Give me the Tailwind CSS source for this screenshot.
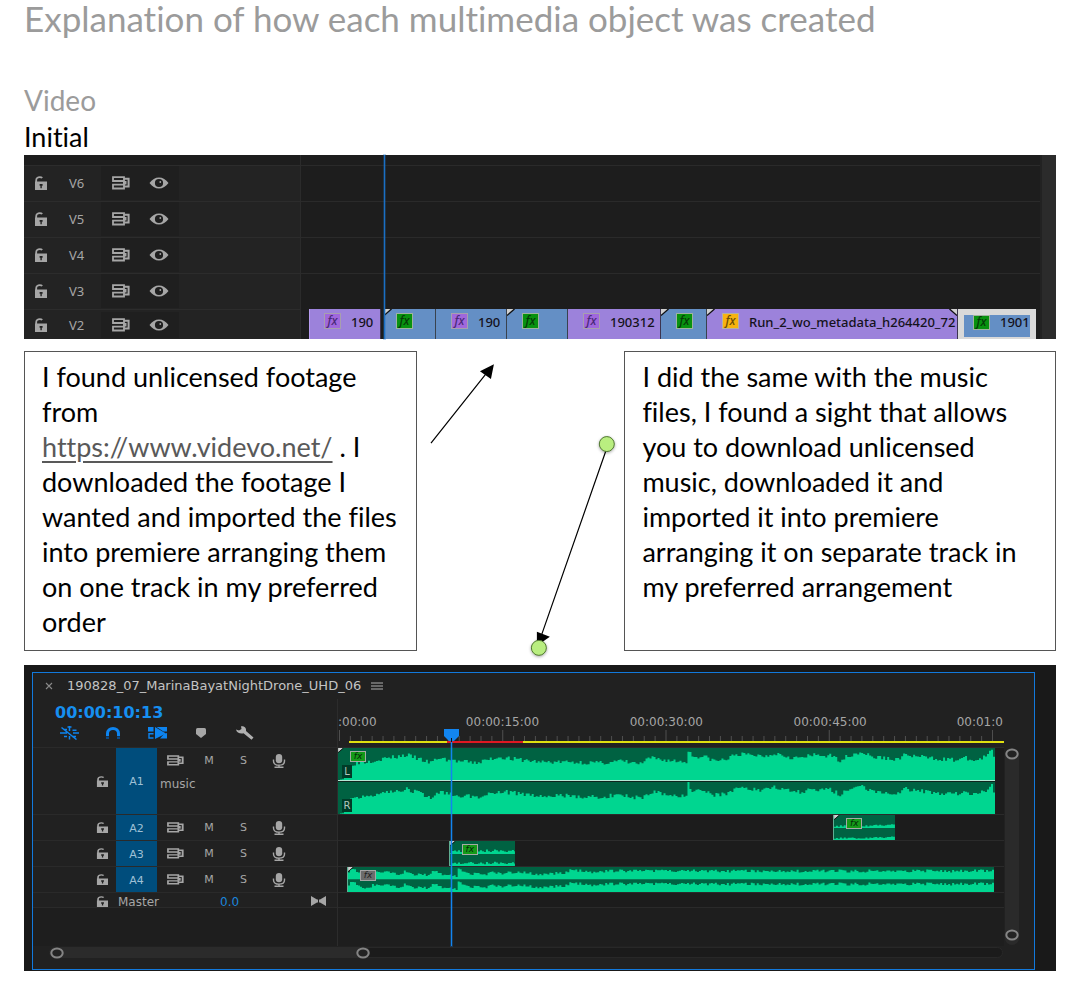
<!DOCTYPE html>
<html lang="en">
<head>
<meta charset="utf-8">
<meta name="viewport" content="width=device-width, initial-scale=1">
<title>Explanation of how each multimedia object was created</title>
<script src="https://cdn.jsdelivr.net/npm/@tailwindcss/browser@4"></script>
</head>
<body class="bg-white font-['Lato',sans-serif] text-black [font-variant-ligatures:none]">

<!-- Shared icon symbols -->
<svg width="0" height="0" class="absolute" aria-hidden="true">
  <symbol id="lock" viewBox="0 0 13 15" preserveAspectRatio="none">
    <path d="M2.200 7V4.500C2.200 2.300 3.800 1.300 5.800 1.300c1 0 1.800.2 2.500.8" fill="none" stroke="currentColor" stroke-width="1.800"/>
    <path fill="currentColor" fill-rule="evenodd" d="M1 6h12v9H1zM5.600 8.500v2h.8v2.500h1.400v-2.500h.8v-2z"/>
  </symbol>
  <symbol id="sync" viewBox="0 0 18 14" preserveAspectRatio="none">
    <path d="M1 1.200h11v3.800H1zM1 8.700h11v3.800H1z" fill="none" stroke="currentColor" stroke-width="1.800"/>
    <path d="M12 2.800h4.600v7.700H12" fill="none" stroke="currentColor" stroke-width="2"/>
    <path d="M11 5h3.500v3.500h-3.500z" fill="currentColor"/>
  </symbol>
  <symbol id="eye" viewBox="0 0 20 12">
    <path fill="currentColor" fill-rule="evenodd" d="M.5 6C3 2.500 6.300.5 10 .5S17 2.500 19.500 6C17 9.500 13.700 11.500 10 11.500S3 9.500.5 6zM10 1.900a4.100 4.100 0 1 0 0 8.200 4.100 4.100 0 0 0 0-8.200z"/>
    <circle cx="11.300" cy="5" r=".9" fill="currentColor"/>
  </symbol>
  <symbol id="mic" viewBox="0 0 14 15" preserveAspectRatio="none">
    <rect x="3.800" y="0" width="6.400" height="10" rx="3.200" fill="currentColor"/>
    <path d="M1.500 6v1.500c0 3 2.300 4.500 5.500 4.500s5.500-1.500 5.500-4.500V6M7 12v2M2.500 14.200h9" fill="none" stroke="currentColor" stroke-width="1.400"/>
  </symbol>
  <symbol id="knob" viewBox="0 0 14 12">
    <ellipse cx="7" cy="6" rx="5.700" ry="4.500" fill="#232323" stroke="#858585" stroke-width="2"/>
  </symbol>
  <symbol id="corner" viewBox="0 0 8 7">
    <path d="M0 0h7L0 6z" fill="#d0d0d0"/><path d="M7.500 0L0 6.500" stroke="#111" stroke-width="1.300"/>
  </symbol>
</svg>

<main class="pl-6 pr-[30px]">
  <h1 class="text-[35px] leading-9 text-[#9b9b9b]">Explanation of how each multimedia object was created</h1>
  <h2 class="mt-[46px] text-[28px] leading-9 text-[#9b9b9b]">Video</h2>
  <h3 class="text-[27px] leading-[37px]">Initial</h3>

  <!-- Video tracks -->
  <section aria-label="Video tracks" class="flex bg-[#1d1d1d] font-['Noto_Sans',sans-serif] text-[#a6a6a6]">
    <div class="w-[277px] shrink-0 border-r border-[#2b2b2b] bg-[#232323]">
      <div class="h-[10px] bg-[#1d1d1d]"></div>
      <div id="video-heads"></div>
    </div>
    <div class="relative flex min-w-0 flex-1 flex-col pt-[10px]">
      <div class="h-9 border-t border-[#2a2a2a]"></div>
      <div class="h-9 border-t border-[#2a2a2a]"></div>
      <div class="h-9 border-t border-[#2a2a2a]"></div>
      <div class="h-9 border-t border-[#2a2a2a]"></div>
      <div class="grid h-[30px] grid-cols-[8fr_72fr_3fr_52fr_71fr_61fr_93fr_46fr_251fr_78fr_4fr] text-[13px] leading-[26px] font-medium whitespace-nowrap text-[#14121c]">
        <div></div>
        <div class="flex min-w-0 gap-[10px] overflow-hidden border-x border-l-[#b79cf0] border-r-[#3c3550] bg-[#9c82db] pl-[14px]"><i class="mt-1 h-4 w-[17px] shrink-0 border border-[#a79fae] bg-[#a068dc] text-center text-[12px] leading-[13px] text-[#4a2a78]">fx</i><span>190</span></div>
        <div></div>
        <div class="relative flex min-w-0 overflow-hidden border-r border-[#39424e] bg-[#648fc5] pl-3"><svg class="absolute left-0 top-0 h-[7px] w-2"><use href="#corner"/></svg><i class="mt-1 h-4 w-[17px] shrink-0 border border-[#9fb39f] bg-[#08920f] text-center text-[12px] leading-[13px] text-[#063b08]">fx</i></div>
        <div class="flex min-w-0 gap-[10px] overflow-hidden border-r border-[#39424e] bg-[#648fc5] pl-[15px]"><i class="mt-1 h-4 w-[17px] shrink-0 border border-[#a79fae] bg-[#a068dc] text-center text-[12px] leading-[13px] text-[#4a2a78]">fx</i><span>190</span></div>
        <div class="relative flex min-w-0 overflow-hidden border-r border-[#39424e] bg-[#648fc5] pl-[15px]"><svg class="absolute left-0 top-0 h-[7px] w-2"><use href="#corner"/></svg><i class="mt-1 h-4 w-[17px] shrink-0 border border-[#9fb39f] bg-[#08920f] text-center text-[12px] leading-[13px] text-[#063b08]">fx</i></div>
        <div class="flex min-w-0 gap-[10px] overflow-hidden border-r border-[#3c3550] bg-[#9c82db] pl-[15px]"><i class="mt-1 h-4 w-[17px] shrink-0 border border-[#a79fae] bg-[#a068dc] text-center text-[12px] leading-[13px] text-[#4a2a78]">fx</i><span>190312</span></div>
        <div class="relative flex min-w-0 overflow-hidden border-r border-[#39424e] bg-[#648fc5] pl-[15px]"><svg class="absolute left-0 top-0 h-[7px] w-2"><use href="#corner"/></svg><i class="mt-1 h-4 w-[17px] shrink-0 border border-[#9fb39f] bg-[#08920f] text-center text-[12px] leading-[13px] text-[#063b08]">fx</i></div>
        <div class="relative flex min-w-0 gap-[10px] overflow-hidden border-r border-[#3c3550] bg-[#9c82db] pl-[15px]"><svg class="absolute left-0 top-0 h-[7px] w-2"><use href="#corner"/></svg><i class="mt-1 h-4 w-[17px] shrink-0 border border-[#b8b0a0] bg-[#f7b310] text-center text-[12px] leading-[13px] text-[#6b4b04]">fx</i><span>Run_2_wo_metadata_h264420_72</span><svg class="absolute right-0 top-0 h-[7px] w-2 -scale-x-100"><use href="#corner"/></svg></div>
        <div class="flex min-w-0 border-x-[6px] border-t-[6px] border-b-2 border-[#d9d9d9] bg-[#648fc5] pl-[9px] leading-[14px]"><i class="h-[15px] w-[17px] shrink-0 border border-[#9fb39f] bg-[#08920f] text-center text-[12px] leading-[12px] text-[#063b08]">fx</i><span class="ml-[10px]">1901</span></div>
        <div></div>
      </div>
      <div class="absolute inset-y-0 left-[11.2%] w-px bg-[#1a6fc4] outline outline-[#1a6fc4]/30"></div>
    </div>
    <div class="w-4 shrink-0 border-l-2 border-[#222222] bg-[#2b2b2b]"></div>
  </section>

  <!-- Notes and connecting arrows -->
  <section class="grid grid-cols-[393fr_208fr_432fr] pt-3 pb-[14px] text-[27px] leading-[35px]">
    <p class="min-h-[300px] border border-[#555] px-[17px] pt-[7px]">I found unlicensed footage<br>from<br><a href="https://www.videvo.net/" class="text-[#595959] underline decoration-2 underline-offset-4">https://www.videvo.net/</a> . I<br>downloaded the footage I<br>wanted and imported the files<br>into premiere arranging them<br>on one track in my preferred<br>order</p>
    <svg viewBox="0 0 208 300" class="h-[300px] w-full overflow-visible" aria-hidden="true">
      <defs><filter id="shade" x="-50%" y="-50%" width="200%" height="200%"><feDropShadow dx="0" dy="1" stdDeviation="1.500" flood-opacity=".35"/></filter></defs>
      <path d="M14 92L72 19M189 100L124 286" stroke="#000" stroke-width="1.200" fill="none"/>
      <path d="M77 13L63 20L74 28ZM120 295L120 281L133 286Z"/>
      <circle cx="190" cy="93" r="7.500" fill="#b9ee80" stroke="#4f7530" filter="url(#shade)"/>
      <circle cx="122" cy="297" r="7.500" fill="#b9ee80" stroke="#4f7530" filter="url(#shade)"/>
    </svg>
    <p class="min-h-[300px] border border-[#555] px-[17px] pt-[7px]">I did the same with the music<br>files, I found a sight that allows<br>you to download unlicensed<br>music, downloaded it and<br>imported it into premiere<br>arranging it on separate track in<br>my preferred arrangement</p>
  </section>

  <!-- Audio sequence -->
  <section aria-label="Audio sequence" class="border-x-8 border-[#191919] bg-[#191919] pt-[7px] pr-[13px] pb-px font-['DejaVu_Sans',sans-serif] text-[#a6a6a6]">
    <div class="border border-[#1279dc] bg-[#212121]">
      <div class="flex h-[26px] items-center pl-3 text-[13px]">
        <button type="button" aria-label="Close sequence" class="flex w-[22px]"><svg class="h-2 w-2" viewBox="0 0 8 8"><path d="M1 1l6 6M7 1L1 7" stroke="#8a8a8a" stroke-width="1.100"/></svg></button>
        <span class="text-[#c4c4c4]">190828_07_MarinaBayatNightDrone_UHD_06</span>
        <button type="button" aria-label="Panel menu" class="ml-[10px]"><svg class="h-2 w-3" viewBox="0 0 12 8"><path d="M0 1h12M0 4h12M0 7h12" stroke="#b0b0b0" stroke-width="1.200"/></svg></button>
      </div>
      <div class="flex">
        <!-- Track headers -->
        <div class="w-[305px] shrink-0 border-r border-[#2c2c2c]">
          <div class="h-[49px] border-b border-[#2a2a2a] pl-[22px]">
            <div class="text-[16px] leading-7 font-bold text-[#168ff0]">00:00:10:13</div>
            <div class="flex h-3 items-center pl-[5px] text-[#0d84f0]">
              <button type="button" aria-label="Nest sequences" class="w-[45px]"><svg class="h-[14px] w-[19px]" viewBox="0 0 19 14"><path d="M0 7h7M4 3.500h3M4 10.500h3M9.500 0v5M7.500 1h4M9.500 10v3.500M13 7h6M12.500 4.200h4M12 10.500h4M1.500 1.500l15 12" stroke="currentColor" stroke-width="1.500"/></svg></button>
              <button type="button" aria-label="Snap" class="w-[43px]"><svg class="h-3 w-4" viewBox="0 0 16 12"><path d="M2.500 9V6.500c0-3 2.300-5 5.500-5s5.500 2 5.500 5V9" fill="none" stroke="currentColor" stroke-width="3"/><path d="M1 9.500h3v2.500H1zM12 9.500h3v2.500h-3z" fill="#0a4a88"/></svg></button>
              <button type="button" aria-label="Linked selection" class="w-[47px]"><svg class="h-3 w-[19px]" viewBox="0 0 19 12"><path d="M0 0h5.500v4.500H0zM8.500 0H19v4.500h-3.500zM16 7l3-1v5.500h-7z" fill="currentColor"/><path d="M5.500 6.700H1v4.300h4.500" fill="none" stroke="currentColor" stroke-width="1.400"/><path d="M7 0v12L18 6.500z" fill="currentColor"/></svg></button>
              <button type="button" aria-label="Add marker" class="w-[41px] text-[#a6a6a6]"><svg class="h-[10px] w-3" viewBox="0 0 12 10"><path d="M2.500 0h7q1.500 0 1.500 1.500V6L6 10 1 6V1.500Q1 0 2.500 0z" fill="currentColor"/></svg></button>
              <button type="button" aria-label="Timeline settings" class="text-[#b0b0b0]"><svg class="h-[14px] w-[18px]" viewBox="0 0 18 14"><path d="M0 3.500L3 4.500 5.500 3 5 .3C8.500 0 10.500 2 10 5l7.500 6.500-2 2.300L7.500 7.300C4 8 .5 6.500 0 3.500z" fill="currentColor"/></svg></button>
            </div>
          </div>
          <div id="audio-heads"></div>
          <div class="grid h-[15px] grid-cols-[83px_101px_91px_29px] items-center border-b border-[#2a2a2a] text-[12px] leading-[14px]">
            <button type="button" aria-label="Lock master" class="flex justify-end pr-2"><svg class="h-[11px] w-3"><use href="#lock"/></svg></button>
            <span class="pt-[2px] pl-[2px]">Master</span>
            <span class="pt-[2px] pl-[3px] text-[#1b86dc]">0.0</span>
            <button type="button" aria-label="Fit master" class="flex pl-[3px]"><svg class="h-[10px] w-[15px]" viewBox="0 0 15 10"><path d="M0 0l6 3.500h3L15 0v10L9 6.500H6L0 10z" fill="currentColor"/><path d="M7.500 3v4" stroke="#212121"/></svg></button>
          </div>
          <div class="h-[38px] bg-[#1e1e1e]"></div>
        </div>

        <!-- Timeline -->
        <div class="relative flex min-w-0 flex-1 flex-col">
          <div class="flex h-[31px] items-end overflow-hidden text-[12px] leading-4 whitespace-nowrap">
            <span class="w-[19.2%] shrink-0">:00:00</span>
            <span class="w-[24.6%] shrink-0">00:00:15:00</span>
            <span class="w-[24.6%] shrink-0">00:00:30:00</span>
            <span class="w-[24.5%] shrink-0">00:00:45:00</span>
            <span>00:01:0</span>
          </div>
          <svg id="ruler" class="h-[11px] w-full" viewBox="0 0 667 11" preserveAspectRatio="none" aria-hidden="true"></svg>
          <div class="flex h-[2px]"><div class="flex-[11]"></div><div class="flex-[98] bg-[#e0e010]"></div><div class="flex-[76] bg-[#e01822]"></div><div class="flex-[482] bg-[#e0e010]"></div></div>
          <div class="h-[5px] border-b border-[#2a2a2a]"></div>

          <div class="grid h-[67px] grid-cols-[658fr_9fr] border-b border-[#2a2a2a] bg-[#1c1c1c]">
            <div class="relative flex min-w-0 flex-col bg-[#006242]">
              <svg data-wave="a1l" class="h-8 w-full" preserveAspectRatio="none"></svg>
              <div class="h-[2px] border-b border-[#10251d] bg-[#b5e8d5]"></div>
              <svg data-wave="a1r" class="h-8 w-full" preserveAspectRatio="none"></svg>
              <svg class="absolute left-0 top-0 h-[5px] w-[6px]"><use href="#corner"/></svg>
              <i class="absolute left-3 top-[3px] h-[11px] w-4 border border-[#a5aaa5] bg-[#149a18] text-center text-[9px] leading-[9px] text-[#04280a]">fx</i>
              <span class="absolute left-1 top-[17px] h-[13px] w-[10px] bg-[#003b28] text-center text-[10px] leading-[13px] text-[#b0c8be]">L</span>
              <span class="absolute left-1 top-[51px] h-[13px] w-[10px] bg-[#003b28] text-center text-[10px] leading-[13px] text-[#b0c8be]">R</span>
            </div>
          </div>
          <div class="grid h-[26px] grid-cols-[496fr_62fr_109fr] border-b border-[#2a2a2a] bg-[#1c1c1c]">
            <div></div>
            <div class="relative flex min-w-0 flex-col border-l border-[#5fae92] bg-[#006242]">
              <svg data-wave="a2" class="h-[13px] w-full" preserveAspectRatio="none"></svg>
              <svg data-wave="a2" class="h-3 w-full" preserveAspectRatio="none"></svg>
              <svg class="absolute left-0 top-0 h-[5px] w-[6px]"><use href="#corner"/></svg>
              <i class="absolute left-3 top-[3px] h-[11px] w-4 border border-[#a5aaa5] bg-[#149a18] text-center text-[9px] leading-[9px] text-[#04280a]">fx</i>
            </div>
          </div>
          <div class="grid h-[26px] grid-cols-[111fr_66fr_490fr] border-b border-[#2a2a2a] bg-[#1c1c1c]">
            <div></div>
            <div class="relative flex min-w-0 flex-col border-l border-[#5fae92] bg-[#006242]">
              <svg data-wave="a3" class="h-[13px] w-full" preserveAspectRatio="none"></svg>
              <svg data-wave="a3" class="h-3 w-full" preserveAspectRatio="none"></svg>
              <svg class="absolute left-0 top-0 h-[5px] w-[6px]"><use href="#corner"/></svg>
              <i class="absolute left-3 top-[3px] h-[11px] w-4 border border-[#a5aaa5] bg-[#149a18] text-center text-[9px] leading-[9px] text-[#04280a]">fx</i>
            </div>
          </div>
          <div class="grid h-[26px] grid-cols-[9fr_648fr_10fr] border-b border-[#2a2a2a] bg-[#1c1c1c]">
            <div></div>
            <div class="relative flex min-w-0 flex-col border-l border-[#5fae92] bg-[#006242]">
              <svg data-wave="a4" class="h-3 w-full" preserveAspectRatio="none"></svg>
              <div class="h-px bg-[#047d56]"></div>
              <svg data-wave="a4" class="h-3 w-full" preserveAspectRatio="none"></svg>
              <svg class="absolute left-0 top-0 h-[5px] w-[6px]"><use href="#corner"/></svg>
              <i class="absolute left-3 top-[3px] h-[11px] w-4 border border-[#a5a5a5] bg-[#6c6c6c] text-center text-[9px] leading-[9px] text-[#222]">fx</i>
            </div>
          </div>
          <div class="h-[15px] border-b border-[#2a2a2a] bg-[#1c1c1c]"></div>
          <div class="flex-1 bg-[#1e1e1e]"></div>

          <!-- Playhead -->
          <div class="absolute top-[31px] bottom-0 left-[17%] w-px bg-[#1285f0] outline outline-[#1285f0]/25">
            <svg class="absolute -left-[7px] -top-px h-[13px] w-[15px]" viewBox="0 0 15 13"><path d="M0 0h15v7l-5 5H5L0 7z" fill="#1285f0"/><path d="M7.500 9v4" stroke="#111"/></svg>
          </div>
        </div>

        <!-- Vertical scrollbar -->
        <div class="w-[30px] shrink-0 pt-[49px]">
          <div class="ml-px flex h-[197px] w-[14px] flex-col items-center justify-between rounded-full bg-[#2a2a2a]">
            <svg class="h-3 w-[14px] shrink-0"><use href="#knob"/></svg>
            <svg class="mb-1 h-3 w-[14px] shrink-0"><use href="#knob"/></svg>
          </div>
        </div>
      </div>
      <!-- Horizontal scrollbar -->
      <div class="mt-px mr-[31px] ml-4 flex h-[11px] rounded-full border border-[#282828] bg-[#1b1b1b]">
        <div class="-my-px flex w-[33.6%] items-center justify-between rounded-full bg-[#2b2b2b]">
          <svg class="h-3 w-[14px]"><use href="#knob"/></svg>
          <svg class="h-3 w-[14px]"><use href="#knob"/></svg>
        </div>
      </div>
      <div class="h-[11px]"></div>
    </div>
  </section>
</main>

<script>
  const videoRow = name => `
    <div class="flex h-9 items-center border-t border-[#2c2c2c] pb-px last:h-[30px] last:pt-[2px]">
      <button type="button" aria-label="Lock ${name}" class="flex w-[39px] pl-[10px]"><svg class="h-[14px] w-[13px]"><use href="#lock"/></svg></button>
      <span class="w-[38px] pl-[6px] text-[13px] leading-[18px]">${name}</span>
      <div class="flex h-full w-[78px] items-center bg-[#1f1f1f] pl-[11px]">
        <button type="button" aria-label="Sync lock ${name}" class="flex w-[37px]"><svg class="h-[14px] w-[18px]"><use href="#sync"/></svg></button>
        <button type="button" aria-label="Show ${name}" class="flex"><svg class="h-3 w-[20px]"><use href="#eye"/></svg></button>
      </div>
    </div>`;
  document.getElementById('video-heads').innerHTML = ['V6', 'V5', 'V4', 'V3', 'V2'].map(videoRow).join('');

  const audioRow = (name, i) => `
    <div class="grid ${i ? 'h-[26px]' : 'h-[67px]'} grid-cols-[83px_41px_1fr] border-b border-[#2a2a2a] text-[11px]">
      <button type="button" aria-label="Lock ${name}" class="flex items-center justify-end pr-2"><svg class="h-[11px] w-3"><use href="#lock"/></svg></button>
      <button type="button" class="bg-[#004d7c] pt-[3px] text-[#9fc0d6]">${name}</button>
      <div>
        <div class="flex h-[25px] items-center">
          <button type="button" aria-label="Sync lock ${name}" class="flex w-9 pl-[10px]"><svg class="h-[11px] w-[17px]"><use href="#sync"/></svg></button>
          <button type="button" aria-label="Mute ${name}" class="w-8 pt-[2px]">M</button>
          <button type="button" aria-label="Solo ${name}" class="w-[37px] pt-[2px]">S</button>
          <button type="button" aria-label="Record ${name}" class="flex w-[33px] justify-center"><svg class="h-[14px] w-[14px]"><use href="#mic"/></svg></button>
        </div>
        ${i ? '' : '<span class="block pl-[3px] text-[12px] leading-[22px]">music</span>'}
      </div>
    </div>`;
  document.getElementById('audio-heads').innerHTML = ['A1', 'A2', 'A3', 'A4'].map(audioRow).join('');

  // Ruler: a long tick every fifteen divisions
  let ticks = '';
  for (let i = 0; i <= 60; i++) {
    const x = (1.5 + i * 10.9).toFixed(1);
    ticks += `M${x} ${i % 15 ? 6 : 0}V11`;
  }
  document.getElementById('ruler').innerHTML = `<path d="${ticks}" stroke="#505050" stroke-width="1"/>`;

  // Envelopes: [x, level] pairs, interpolated and given a little deterministic jitter
  const loud = [350,16,406,25,430,17,437,22,455,19,475,17,490,21,500,23,512,21,540,18,565,18,600,17,620,19,640,16,650,22,665,20,686,18,687,30,689,30,691,24,705,23,715,19,728,21,735,26,765,24,775,27,790,23,800,22,815,25,830,24,840,20,850,25,862,28,872,23,885,22,895,20,905,25,930,22,955,20,965,22,975,19,985,23,992,29,995,20].map((v, i) => i % 2 ? v : v - 338);
  const saw = [0,8,4,10,12,6,18,4,28,8,38,8,54,4,55,9,66,4,82,4,83,9,95,4,109,3,110,9,125,5,138,4,139,8,155,5,165,7,190,5,220,6,221,10,240,7,260,8,648,8];
  const waves = {
    a1l: { w: 658, h: 32, pts: [0,0,5,1,9,9].concat(loud), j: 2.2, seed: 3 },
    a1r: { w: 658, h: 32, pts: [0,0,5,1,9,11].concat(loud), j: 2.2, seed: 8 },
    a2: { w: 62, h: 12, pts: [0,2,25,2,62,3], j: 0.8, seed: 4 },
    a3: { w: 65, h: 12, pts: [0,2,8,3,28,3,65,3], j: 1.3, seed: 5 },
    a4: { w: 648, h: 12, pts: saw, j: 1.5, seed: 6 }
  };
  document.querySelectorAll('[data-wave]').forEach(svg => {
    const o = waves[svg.dataset.wave];
    let s = o.seed, k = 0, d = `M0 ${o.h}`;
    for (let x = 0; x < o.w; x += 2) {
      while (k + 4 < o.pts.length && o.pts[k + 2] <= x) k += 2;
      const [x0, y0, x1, y1] = o.pts.slice(k, k + 4);
      s = (s * 16807) % 2147483647;
      const r = s / 2147483647 * 2 - 1;
      const v = y0 + (y1 - y0) * Math.min(1, (x - x0) / (x1 - x0)) + (y0 > 1 ? r * o.j : 0);
      d += `V${(o.h - Math.max(0, Math.min(o.h, v))).toFixed(1)}H${Math.min(x + 2, o.w)}`;
    }
    svg.setAttribute('viewBox', `0 0 ${o.w} ${o.h}`);
    svg.innerHTML = `<path d="${d}V${o.h}Z" fill="#00d690"/>`;
  });
</script>
</body>
</html>
